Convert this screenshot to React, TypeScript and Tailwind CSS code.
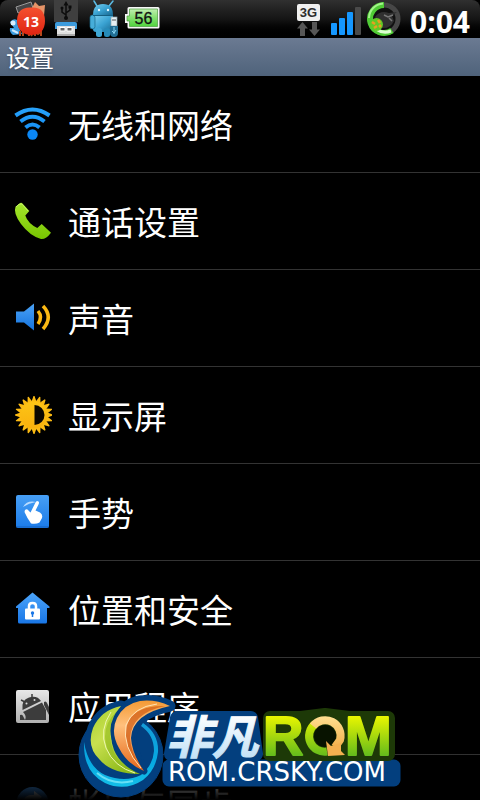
import React from "react";

// ─── Status bar icons ────────────────────────────────────────────────────────

function FlashBadgeIcon() {
  return (
    <svg width="42" height="38" viewBox="0 0 42 38" role="img" aria-label="13">
      <defs>
        <linearGradient id="badge" x1="0" y1="0" x2="0" y2="1">
          <stop offset="0" stopColor="#f4512f" />
          <stop offset="1" stopColor="#e02412" />
        </linearGradient>
      </defs>
      <path d="M8 7L23 2L25 8L10 13Z" fill="#454648" stroke="#9a9a9a" strokeWidth="1" />
      <path d="M2 22Q5 18 9 20L10 26L14 34L5 35Q1 32 2 28L6 28Z" fill="#3d9de0" />
      <circle cx="5" cy="23" r="2.5" fill="#d8efff" />
      <path d="M4 30L10 33" stroke="#cfeaff" strokeWidth="2" />
      <path d="M12 36V31M15 36V32H18M21 36V31L24 36M27 36V32L30 34L33 32V36" fill="none" stroke="#b3471c" strokeWidth="2" />
      <path d="M24 8L27 2L31 6L37 5L36 16Z" fill="#e59468" />
      <path d="M9 21Q9 15 12 11Q16 7 23 7.500Q31 7 34 11Q37 15 37 21Q37 28 33 32Q29 35 23 35Q17 35 13 31Q9 27 9 21Z" fill="url(#badge)" />
      <text x="23" y="27" textAnchor="middle" fill="#fff" fontSize="14" fontWeight="700" fontFamily="'Open Sans', sans-serif">13</text>
    </svg>
  );
}

function UsbIcon() {
  return (
    <svg width="24" height="38" viewBox="0 0 24 38" aria-hidden="true">
      <rect width="24" height="22" fill="#3f3f3f" />
      <g stroke="#0c0c0c" strokeWidth="1.5" fill="none">
        <path d="M12 5V18M12 15L8 12V8M12 13L16 10V7" />
      </g>
      <path d="M12 1L14.500 5.500H9.500Z" fill="#0c0c0c" />
      <circle cx="12" cy="18" r="2" fill="#0c0c0c" />
      <circle cx="8" cy="8" r="1.500" fill="#0c0c0c" />
      <rect x="14.500" y="5.500" width="3" height="3" fill="#0c0c0c" />
      <path d="M3 22H21Q23 22 23 24V29H1V24Q1 22 3 22Z" fill="#3d9bdc" />
      <path d="M3 26H21V36H3Z" fill="#dfdfdf" />
      <path d="M6 27.500H11V31H6ZM13 27.500H18V31H13Z" fill="#666" stroke="#fff" />
      <path d="M3 35H21" stroke="#999" strokeWidth="1.5" />
    </svg>
  );
}

function BlueRobotIcon() {
  return (
    <svg width="38" height="38" viewBox="0 0 38 38" aria-hidden="true">
      <defs>
        <linearGradient id="robot" x1="0" y1="0" x2="1" y2="1">
          <stop offset="0" stopColor="#79cdee" />
          <stop offset="0.5" stopColor="#3aa3d3" />
          <stop offset="1" stopColor="#17668f" />
        </linearGradient>
      </defs>
      <path d="M15 6L12 1M27 6L31 1" stroke="#5bbbe4" strokeWidth="1.5" strokeLinecap="round" />
      <path d="M11 15Q11 4 21 4Q31 4 31 15Z" fill="url(#robot)" />
      <path d="M11 16H31V29Q31 32 28 32H14Q11 32 11 29Z" fill="url(#robot)" />
      <rect x="8" y="15" width="5" height="14" rx="2.500" fill="#46add9" stroke="#176789" strokeWidth="0.7" />
      <rect x="14" y="28" width="6" height="9" rx="2.500" fill="#3fa6d4" />
      <rect x="22" y="28" width="6" height="9" rx="2.500" fill="#268bb9" />
      <path d="M11 15.500H31" stroke="#145f82" strokeWidth="1" />
      <circle cx="17" cy="10" r="1.200" fill="#e4f7ff" />
      <circle cx="26" cy="10" r="1.200" fill="#e4f7ff" />
      <rect x="29" y="17" width="6" height="9" fill="#e5eef2" stroke="#8ca5b0" strokeWidth="0.700" />
      <path d="M31 19V21M33 19V21" stroke="#555" />
      <path d="M28 26H36V33Q36 37 32 37Q28 37 28 33Z" fill="#216e94" />
      <path d="M32 27V34M30 31L32 33L34 30" stroke="#8bd6f4" fill="none" />
    </svg>
  );
}

function BatteryIcon() {
  return (
    <svg width="36" height="38" viewBox="0 0 36 38" role="img" aria-label="56">
      <defs>
        <linearGradient id="battery" x1="0" y1="0" x2="0" y2="1">
          <stop offset="0" stopColor="#c0efb1" />
          <stop offset="0.45" stopColor="#8be176" />
          <stop offset="1" stopColor="#4fd43d" />
        </linearGradient>
      </defs>
      <path d="M5 7H34Q35.500 7 35.500 8.500V27Q35.500 28.500 34 28.500H5Q3.500 28.500 3.500 27V23H1V14H3.500V8.500Q3.500 7 5 7Z" fill="#f7f7f7" />
      <path d="M5.500 9H33.500V26.500H5.500V21H3V16H5.500Z" fill="url(#battery)" stroke="#4c9c41" strokeWidth="0.700" />
      <text x="19.500" y="24" textAnchor="middle" fill="#111" fontSize="16" fontFamily="'Liberation Sans', sans-serif" stroke="#111" strokeWidth="0.300">56</text>
    </svg>
  );
}

function DataIcon() {
  return (
    <svg width="30" height="38" viewBox="0 0 30 38" role="img" aria-label="3G">
      <rect x="1" y="4" width="23" height="17" rx="2" fill="#f0f0f0" />
      <text x="12.500" y="17" textAnchor="middle" fill="#2d2d2d" fontSize="13" fontWeight="700" fontFamily="'Liberation Sans', sans-serif">3G</text>
      <path d="M6.500 22L12 28.500H9V36H4V28.500H1ZM18.500 36L13 29.500H16V22H21V29.500H24Z" fill="#565656" />
    </svg>
  );
}

function SignalIcon() {
  return (
    <svg width="32" height="38" viewBox="0 0 32 38" aria-hidden="true">
      <g fill="#1597ff">
        <rect x="1" y="23" width="6" height="12" rx="1" />
        <rect x="9" y="18" width="6" height="17" rx="1" />
        <rect x="17" y="12" width="6" height="23" rx="1" />
      </g>
      <rect x="25" y="7" width="6" height="28" rx="1" fill="#4a4a4a" />
    </svg>
  );
}

function DialIcon() {
  return (
    <svg width="36" height="38" viewBox="0 0 36 38" aria-hidden="true">
      <circle cx="18" cy="19" r="14" fill="#111" stroke="#474747" strokeWidth="5" />
      <path d="M18 5A14 14 0 1 0 26 30.500" fill="none" stroke="#4fcb35" strokeWidth="6" />
      <path d="M17 3.500A15 15 0 0 0 3 18" fill="none" stroke="#a4f28c" strokeWidth="2" />
      <path d="M10 29Q17 34 25 31" fill="none" stroke="#dcffd0" strokeWidth="3" />
      <path d="M9 17Q14 10 23 13L31 12L26 16L28 21Q24 29 16 28Z" fill="#303030" />
      <path d="M18 15L22 17L27 15M23 18L26 21" stroke="#777" strokeWidth="1.500" fill="none" />
      <circle cx="10.500" cy="24.500" r="6.500" fill="#61c926" />
      <path d="M6 22L9 24M12 20L14 23M8 28L11 26M13 27L15 25" stroke="#e8a020" strokeWidth="2.500" />
    </svg>
  );
}

// ─── Row icons ───────────────────────────────────────────────────────────────

function WifiIcon() {
  return (
    <svg className="size-10" viewBox="0 0 40 40" aria-hidden="true">
      <defs>
        <linearGradient id="wifi" x1="0" y1="0" x2="0" y2="40" gradientUnits="userSpaceOnUse">
          <stop offset="0" stopColor="#2ba6fb" />
          <stop offset="1" stopColor="#0a83f2" />
        </linearGradient>
      </defs>
      <g fill="none" stroke="url(#wifi)" strokeWidth="4">
        <path d="M3.500 11.500Q20.500 -0.500 37.500 11.500" />
        <path d="M8.500 17.500Q20.500 8 32.500 17.500" />
        <path d="M13.500 23.500Q20.500 17.500 27.500 23.500" />
      </g>
      <circle cx="20.500" cy="30.500" r="5.200" fill="#0b87f5" />
    </svg>
  );
}

function PhoneIcon() {
  return (
    <svg className="size-10" viewBox="0 0 40 40" aria-hidden="true">
      <defs>
        <linearGradient id="phone" x1="0" y1="0" x2="0" y2="1">
          <stop offset="0" stopColor="#a4e62c" />
          <stop offset="1" stopColor="#77c400" />
        </linearGradient>
      </defs>
      <path d="M7 3Q9 1 10.500 2.500L17.300 10L13.300 14.500Q16 22.500 25.300 27L29.700 23L39 31.700Q34 38.500 29 38Q18 35 9 23Q1 12 3.500 5.700Z" fill="url(#phone)" />
      <path d="M4 6Q7 2 10 3L16 10" fill="none" stroke="#c4f264" strokeWidth="1" />
    </svg>
  );
}

function SoundIcon() {
  return (
    <svg className="size-10" viewBox="0 0 40 40" aria-hidden="true">
      <defs>
        <linearGradient id="speaker" x1="0" y1="0" x2="0" y2="1">
          <stop offset="0" stopColor="#4ba2f5" />
          <stop offset="1" stopColor="#1473df" />
        </linearGradient>
      </defs>
      <path d="M4 13.500H12L22 5.500V32.500L12 24.500H4Z" fill="url(#speaker)" />
      <g fill="none" stroke="#fcb913" strokeWidth="3.500">
        <path d="M26 13Q31 19 26 26" />
        <path d="M31 8Q41.500 19 31 31" />
      </g>
    </svg>
  );
}

const SUN_SPIKES = Array.from({ length: 20 }, (_, i) => i * 18);

function DisplayIcon() {
  return (
    <svg className="size-10" viewBox="0 0 40 40" aria-hidden="true">
      <defs>
        <linearGradient id="sun" x1="0" y1="1" x2="0" y2="39" gradientUnits="userSpaceOnUse">
          <stop offset="0" stopColor="#fdc918" />
          <stop offset="1" stopColor="#f9ad0c" />
        </linearGradient>
      </defs>
      <g fill="#fcbb12">
        {SUN_SPIKES.map((deg) => (
          <path key={deg} d="M19 8L21.500 1H22.500L25 8Z" transform={`rotate(${deg} 22 20)`} />
        ))}
      </g>
      <circle cx="22" cy="20" r="13.500" fill="url(#sun)" />
      <path d="M22.500 10A10 10 0 0 1 22.500 30Z" fill="#0b0700" />
    </svg>
  );
}

function GestureIcon() {
  return (
    <svg className="size-10" viewBox="0 0 40 40" aria-hidden="true">
      <defs>
        <linearGradient id="tile" x1="0" y1="0" x2="0" y2="1">
          <stop offset="0" stopColor="#479ff5" />
          <stop offset="1" stopColor="#1b7be9" />
        </linearGradient>
      </defs>
      <rect x="4" y="3" width="33" height="33" rx="2" fill="url(#tile)" />
      <path d="M4.500 35H36.500" stroke="#1460bd" strokeWidth="1" />
      <path d="M11 15Q15 8 24 10Q17 11 11 15Z" fill="#b9dcff" />
      <path d="M23.500 10.500Q24.500 8 26.500 9.500Q27.500 10.500 26.500 12.500L23.500 18.500L28 20.500Q31 22.500 30 26L27.500 30.500Q24 32.500 19 31.500L15.500 26L12.500 20Q12.500 16.500 15.500 17.500L18.500 20.500Z" fill="#fff" />
    </svg>
  );
}

function SecurityIcon() {
  return (
    <svg className="size-10" viewBox="0 0 40 40" aria-hidden="true">
      <defs>
        <linearGradient id="house" x1="0" y1="0" x2="0" y2="1">
          <stop offset="0" stopColor="#4ca5fa" />
          <stop offset="1" stopColor="#1976e6" />
        </linearGradient>
      </defs>
      <path d="M20.500 3.500L37.500 17.500V19H35V33Q35 34.500 33.500 34.500H7.500Q6 34.500 6 33V19H4V17.500Z" fill="url(#house)" />
      <path d="M17 20V17Q17 14 20.500 14Q24 14 24 17V20" fill="none" stroke="#fff" strokeWidth="2.500" />
      <rect x="13" y="19.500" width="15" height="11" rx="1" fill="#fff" />
      <circle cx="20.500" cy="24" r="1.700" fill="#1976e6" />
      <path d="M20.500 24V28" stroke="#1976e6" strokeWidth="1.500" />
    </svg>
  );
}

function AppsIcon() {
  return (
    <svg className="size-10" viewBox="0 0 40 40" aria-hidden="true">
      <defs>
        <linearGradient id="apps" x1="0" y1="0" x2="0" y2="1">
          <stop offset="0" stopColor="#e8e8e8" />
          <stop offset="1" stopColor="#b0b0b0" />
        </linearGradient>
        <clipPath id="appsTile">
          <rect x="4" y="4" width="33" height="33" rx="2" />
        </clipPath>
      </defs>
      <rect x="4" y="4" width="33" height="33" rx="2" fill="url(#apps)" />
      <g clipPath="url(#appsTile)" fill="#3c3c3c">
        <path d="M20 8V12M9 14L13 16" stroke="#3c3c3c" strokeWidth="1.500" />
        <path d="M10.500 24Q9 14 17 11.500Q25 9 29 15Z" />
        <path d="M11 26L30 16.500L34 24V34H13Q15 30 11 26Z" />
        <path d="M32 16Q34 14.500 35 17L37 21V29L32 19Z" />
        <path d="M8 29Q10 28 11 30L13 34H8Z" />
        <circle cx="14.500" cy="17.500" r="1" fill="#ddd" />
        <circle cx="22.500" cy="14" r="1" fill="#ddd" />
      </g>
    </svg>
  );
}

function SyncIcon() {
  return (
    <svg className="size-10" viewBox="0 0 40 40" aria-hidden="true">
      <circle cx="20.500" cy="20" r="16" fill="#3a8ee6" />
      <path d="M11 20Q12 11 22 12V8L30 14L22 20V16Q15 15 14 20Z" fill="#e8f3ff" />
      <path d="M30 20Q29 29 19 28V32L11 26L19 20V24Q26 25 27 20Z" fill="#e8f3ff" />
    </svg>
  );
}

// ─── Watermark ───────────────────────────────────────────────────────────────

const GREEN_CRESCENT = "M44 12Q24 16 16 34Q9 53 23 66Q35 80 63 80Q44 72 37 56Q29 36 44 12Z";
const ORANGE_CRESCENT = "M93 12Q78 5 63 7Q47 10 40 24Q33 38 42 54Q50 70 67 77Q55 60 54 44Q55 20 93 12Z";

function RomLogo() {
  return (
    <svg width="326" height="106" viewBox="0 0 326 106" role="img" aria-label="非凡ROM ROM.CRSKY.COM">
      <defs>
        <linearGradient id="ring" x1="0" y1="0" x2="0" y2="1">
          <stop offset="0" stopColor="#149bd8" />
          <stop offset="0.6" stopColor="#06a9e2" />
          <stop offset="1" stopColor="#14bfe8" />
        </linearGradient>
        <linearGradient id="leaf" x1="0" y1="0" x2="0.6" y2="1">
          <stop offset="0" stopColor="#a7cf2c" />
          <stop offset="0.45" stopColor="#c9e050" />
          <stop offset="1" stopColor="#8ebb1a" />
        </linearGradient>
        <linearGradient id="flame" x1="0" y1="0" x2="0" y2="1">
          <stop offset="0" stopColor="#f49a35" />
          <stop offset="0.35" stopColor="#ffc07c" />
          <stop offset="1" stopColor="#e5661a" />
        </linearGradient>
        <linearGradient id="ice" x1="0" y1="0" x2="0" y2="1">
          <stop offset="0.2" stopColor="#ffffff" />
          <stop offset="1" stopColor="#b5dbf5" />
        </linearGradient>
        <linearGradient id="lime" x1="0" y1="22" x2="0" y2="62" gradientUnits="userSpaceOnUse">
          <stop offset="0" stopColor="#eaf600" />
          <stop offset="1" stopColor="#63bb1c" />
        </linearGradient>
        <linearGradient id="gold" x1="0" y1="22" x2="0" y2="62" gradientUnits="userSpaceOnUse">
          <stop offset="0" stopColor="#ffdf91" />
          <stop offset="1" stopColor="#efa33a" />
        </linearGradient>
      </defs>

      {/* navy and dark green backing */}
      <g fill="#033f7e" stroke="#033f7e" strokeLinejoin="round">
        <circle cx="44" cy="61" r="42" />
        <path d={ORANGE_CRESCENT} strokeWidth="11" />
        <path d={GREEN_CRESCENT} strokeWidth="11" />
        <path d="M92 72H317V86H92Z" strokeWidth="13" />
        <path d="M100 24H174L179 60H94Z" strokeWidth="14" />
      </g>
      <path d="M193 24H224L248 21L272 24H311V60H193Z" fill="#1d3907" stroke="#1d3907" strokeWidth="14" strokeLinejoin="round" />
      <circle cx="248" cy="42" r="11" fill="#081300" />

      <path d="M66 29Q82 40 81 58Q79 76 66 86Q48 98 28 89Q6 78 7 48Q11 73 28 81Q48 89 64 81Q76 71 77 57Q77 41 64 32Z" fill="url(#ring)" />
      <path d="M20 79Q35 92 56 87" fill="none" stroke="#67dff5" strokeWidth="2" />
      <path d={GREEN_CRESCENT} fill="url(#leaf)" />
      <path d="M40 17Q23 33 30 54Q36 72 58 79Q42 71 36 56Q29 38 40 17Z" fill="#8fb91c" opacity="0.6" />
      <path d="M34 18Q22 36 29 54Q37 73 58 79" fill="none" stroke="#edf7b0" strokeWidth="1" />
      <path d={ORANGE_CRESCENT} fill="url(#flame)" stroke="#033f7e" strokeWidth="7" strokeLinejoin="round" />
      <path d={ORANGE_CRESCENT} fill="url(#flame)" />
      <path d="M88 12Q62 11 52 26Q43 44 58 66L66 76Q54 60 53 44Q55 19 88 12Z" fill="#cf5a12" opacity="0.7" />
      <path d="M80 10Q56 13 49 31Q45 53 64 74" fill="none" stroke="#ffe2b5" strokeWidth="1" />

      <text x="89" y="60" fontSize="46" fontWeight="700" fontStyle="italic" fill="url(#ice)" stroke="url(#ice)" strokeWidth="1" fontFamily="'Noto Sans CJK SC', sans-serif">非凡</text>
      <g fontFamily="'Liberation Sans', sans-serif" fontSize="56" fontWeight="700" fill="url(#lime)" stroke="url(#lime)" strokeWidth="2" strokeLinejoin="round">
        <text x="186" y="61">R</text>
        <text x="268" y="61">M</text>
      </g>
      <path d="M250 57.500A15.500 15.500 0 0 1 238 30" fill="none" stroke="url(#lime)" strokeWidth="8" />
      <path d="M236 32A15.500 15.500 0 0 1 263 46L258 53" fill="none" stroke="url(#gold)" strokeWidth="8" />
      <path d="M249 47L251 62L268 61L264 57L264 49L254 52Z" fill="#f3b04f" />
      <text x="91" y="87" fontSize="26" fill="#fff" fontFamily="'DejaVu Sans', sans-serif">ROM.CRSKY.COM</text>
    </svg>
  );
}

// ─── Screen ──────────────────────────────────────────────────────────────────

const ITEMS: { label: string; Icon: () => React.ReactElement }[] = [
  { label: "无线和网络", Icon: WifiIcon },
  { label: "通话设置", Icon: PhoneIcon },
  { label: "声音", Icon: SoundIcon },
  { label: "显示屏", Icon: DisplayIcon },
  { label: "手势", Icon: GestureIcon },
  { label: "位置和安全", Icon: SecurityIcon },
  { label: "应用程序", Icon: AppsIcon },
  { label: "帐户与同步", Icon: SyncIcon },
];

function StatusBar() {
  return (
    <div className="flex h-[38px] shrink-0 items-center justify-between rounded-t-lg bg-linear-to-b from-[#303030] via-[#151515] to-black pr-2.5 pl-2">
      <div className="flex items-center gap-1">
        <FlashBadgeIcon />
        <UsbIcon />
        <BlueRobotIcon />
        <BatteryIcon />
      </div>
      <div className="flex items-center gap-1">
        <DataIcon />
        <SignalIcon />
        <DialIcon />
        <time className="ml-1 pt-1.5 font-['Open_Sans',sans-serif] text-[30px] leading-8 font-bold">0:04</time>
      </div>
    </div>
  );
}

export default function App() {
  return (
    <div className="relative flex h-screen flex-col overflow-hidden bg-black font-['Liberation_Sans','Noto_Sans_CJK_SC',sans-serif] text-white">
      <StatusBar />
      <header className="flex h-[38px] shrink-0 items-center bg-linear-to-b from-[#6b7a92] to-[#4f637b] px-1.5">
        <h1 className="pt-1 text-2xl text-shadow-md">设置</h1>
      </header>
      <main className="min-h-0 flex-1 overflow-hidden">
        <ul>
          {ITEMS.map(({ label, Icon }) => (
            <li key={label} className="border-b border-[#333]">
              <button type="button" className="flex h-24 w-full items-center gap-4 px-3 text-left">
                <Icon />
                <span className="pt-1.5 text-[33px] leading-10">{label}</span>
              </button>
            </li>
          ))}
        </ul>
      </main>
      <div className="pointer-events-none absolute inset-x-0 bottom-0 h-12 bg-linear-to-b from-transparent to-black" />
      <div className="pointer-events-none absolute bottom-0 left-1/2 -translate-x-1/2">
        <RomLogo />
      </div>
    </div>
  );
}
